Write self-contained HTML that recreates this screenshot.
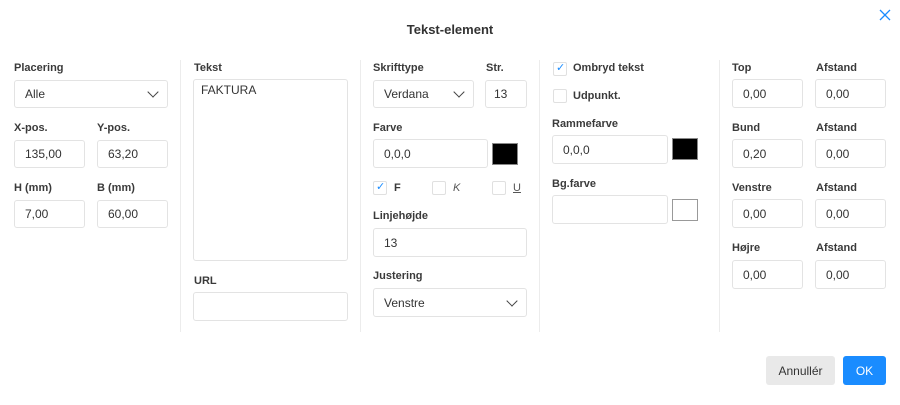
<!DOCTYPE html>
<html><head><meta charset="utf-8"><style>
*{box-sizing:border-box;margin:0;padding:0}
body{width:900px;height:405px;background:#fff;font-family:"Liberation Sans",Arial,sans-serif;position:relative;overflow:hidden;color:#333}
.a{position:absolute}
.l{position:absolute;font-size:11px;font-weight:bold;color:#3a3a3a;line-height:12px}
.i{position:absolute;border:1px solid #e3e3e3;border-radius:3px;font-size:12px;color:#333;padding-left:10px;display:flex;align-items:center;background:#fff}
.v{position:absolute;width:1px;background:#ececec;top:60px;height:272px}
.cb{position:absolute;width:14px;height:14px;border:1px solid #e0e0e0;border-radius:2px;background:#fff}
.chev{position:absolute;right:10px;top:9px;width:8px;height:8px;border-right:1.3px solid #444;border-bottom:1.3px solid #444;transform:rotate(45deg)}
</style></head><body>
<div class="a" style="left:0;width:900px;top:22px;text-align:center;font-size:13px;font-weight:bold;color:#333">Tekst-element</div>
<svg class="a" style="left:879px;top:9px" width="12" height="12" viewBox="0 0 12 12"><path d="M1 1L11 11M11 1L1 11" stroke="#1a8cff" stroke-width="1.3"/></svg>
<div class="v" style="left:180px"></div><div class="v" style="left:360px"></div><div class="v" style="left:539px"></div><div class="v" style="left:719px"></div>

<div class="l" style="left:14px;top:62px">Placering</div>
<div class="i" style="left:14px;top:80px;width:154px;height:28px">Alle<span class="chev" style="top:7px"></span></div>
<div class="l" style="left:14px;top:122px">X-pos.</div><div class="l" style="left:97px;top:122px">Y-pos.</div>
<div class="i" style="left:14px;top:140px;width:71px;height:28px">135,00</div>
<div class="i" style="left:97px;top:140px;width:71px;height:28px">63,20</div>
<div class="l" style="left:14px;top:182px">H (mm)</div><div class="l" style="left:97px;top:182px">B (mm)</div>
<div class="i" style="left:14px;top:200px;width:71px;height:28px">7,00</div>
<div class="i" style="left:97px;top:200px;width:71px;height:28px">60,00</div>

<div class="l" style="left:194px;top:62px">Tekst</div>
<div class="i" style="left:193px;top:79px;width:155px;height:182px;align-items:flex-start;padding-left:7px;padding-top:3px">FAKTURA</div>
<div class="l" style="left:194px;top:275px">URL</div>
<div class="i" style="left:193px;top:292px;width:155px;height:29px"></div>

<div class="l" style="left:373px;top:62px">Skrifttype</div><div class="l" style="left:486px;top:62px">Str.</div>
<div class="i" style="left:373px;top:80px;width:101px;height:28px">Verdana<span class="chev" style="top:7px"></span></div>
<div class="i" style="left:485px;top:80px;width:42px;height:28px;padding-left:8px">13</div>
<div class="l" style="left:373px;top:122px">Farve</div>
<div class="i" style="left:373px;top:139px;width:115px;height:29px">0,0,0</div>
<div class="a" style="left:492px;top:143px;width:26px;height:22px;background:#000;border:1px solid #888"></div>
<div class="cb" style="left:373px;top:181px"></div><div class="a" style="left:376px;top:180px;color:#1a8cff;font-size:11px">✓</div>
<div class="l" style="left:394px;top:182px">F</div>
<div class="cb" style="left:432px;top:181px"></div><div class="a" style="left:453px;top:182px;font-size:11px;font-style:italic;color:#555">K</div>
<div class="cb" style="left:492px;top:181px"></div><div class="a" style="left:513px;top:182px;font-size:11px;text-decoration:underline;color:#555">U</div>
<div class="l" style="left:373px;top:210px">Linjehøjde</div>
<div class="i" style="left:373px;top:228px;width:154px;height:29px">13</div>
<div class="l" style="left:373px;top:270px">Justering</div>
<div class="i" style="left:373px;top:288px;width:154px;height:29px">Venstre<span class="chev" style="top:8px"></span></div>

<div class="cb" style="left:553px;top:62px"></div><div class="a" style="left:556px;top:61px;color:#1a8cff;font-size:11px">✓</div>
<div class="l" style="left:573px;top:62px">Ombryd tekst</div>
<div class="cb" style="left:553px;top:89px"></div>
<div class="l" style="left:573px;top:90px">Udpunkt.</div>
<div class="l" style="left:552px;top:118px">Rammefarve</div>
<div class="i" style="left:552px;top:135px;width:116px;height:29px">0,0,0</div>
<div class="a" style="left:672px;top:138px;width:26px;height:22px;background:#000;border:1px solid #888"></div>
<div class="l" style="left:552px;top:178px">Bg.farve</div>
<div class="i" style="left:552px;top:195px;width:116px;height:29px"></div>
<div class="a" style="left:672px;top:199px;width:26px;height:22px;background:#fff;border:1px solid #999"></div>

<div class="l" style="left:732px;top:62px">Top</div><div class="l" style="left:816px;top:62px">Afstand</div>
<div class="i" style="left:732px;top:79px;width:71px;height:29px">0,00</div><div class="i" style="left:815px;top:79px;width:71px;height:29px">0,00</div>
<div class="l" style="left:732px;top:122px">Bund</div><div class="l" style="left:816px;top:122px">Afstand</div>
<div class="i" style="left:732px;top:139px;width:71px;height:29px">0,20</div><div class="i" style="left:815px;top:139px;width:71px;height:29px">0,00</div>
<div class="l" style="left:732px;top:182px">Venstre</div><div class="l" style="left:816px;top:182px">Afstand</div>
<div class="i" style="left:732px;top:199px;width:71px;height:29px">0,00</div><div class="i" style="left:815px;top:199px;width:71px;height:29px">0,00</div>
<div class="l" style="left:732px;top:242px">Højre</div><div class="l" style="left:816px;top:242px">Afstand</div>
<div class="i" style="left:732px;top:260px;width:71px;height:29px">0,00</div><div class="i" style="left:815px;top:260px;width:71px;height:29px">0,00</div>

<div class="a" style="left:766px;top:356px;width:69px;height:29px;background:#e9e9e9;border-radius:3px;font-size:12px;color:#333;display:flex;align-items:center;justify-content:center">Annullér</div>
<div class="a" style="left:843px;top:356px;width:43px;height:29px;background:#1a8cff;border-radius:3px;font-size:12px;color:#fff;display:flex;align-items:center;justify-content:center">OK</div>
</body></html>
